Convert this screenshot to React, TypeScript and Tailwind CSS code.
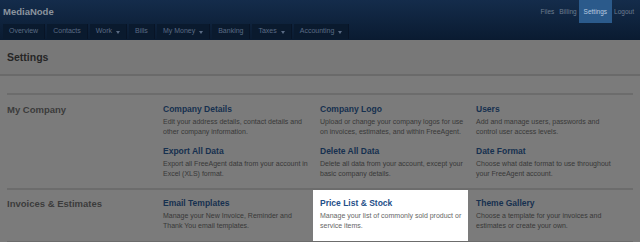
const tabs = [
  { label: "Overview" },
  { label: "Contacts" },
  { label: "Work", menu: true },
  { label: "Bills" },
  { label: "My Money", menu: true },
  { label: "Banking" },
  { label: "Taxes", menu: true },
  { label: "Accounting", menu: true },
];

type Item = { title: string; lines: string[]; active?: boolean };

const sections: { name: string; cols: Item[][] }[] = [
  {
    name: "My Company",
    cols: [
      [
        {
          title: "Company Details",
          lines: ["Edit your address details, contact details and", "other company information."],
        },
        {
          title: "Export All Data",
          lines: ["Export all FreeAgent data from your account in", "Excel (XLS) format."],
        },
      ],
      [
        {
          title: "Company Logo",
          lines: ["Upload or change your company logos for use", "on invoices, estimates, and within FreeAgent."],
        },
        {
          title: "Delete All Data",
          lines: ["Delete all data from your account, except your", "basic company details."],
        },
      ],
      [
        {
          title: "Users",
          lines: ["Add and manage users, passwords and", "control user access levels."],
        },
        {
          title: "Date Format",
          lines: ["Choose what date format to use throughout", "your FreeAgent account."],
        },
      ],
    ],
  },
  {
    name: "Invoices & Estimates",
    cols: [
      [
        {
          title: "Email Templates",
          lines: ["Manage your New Invoice, Reminder and", "Thank You email templates."],
        },
      ],
      [
        {
          title: "Price List & Stock",
          lines: ["Manage your list of commonly sold product or", "service items."],
          active: true,
        },
      ],
      [
        {
          title: "Theme Gallery",
          lines: ["Choose a template for your invoices and", "estimates or create your own."],
        },
      ],
    ],
  },
];

function Caret() {
  return (
    <svg width="4" height="3" viewBox="0 0 4 3" className="ml-[4px] mt-[1px]">
      <path d="M0 0h4L2 3z" fill="currentColor" />
    </svg>
  );
}

function SettingItem({ item }: { item: Item }) {
  return (
    <div className="mb-[9px] last:mb-0">
      <div
        className={
          "text-[8.5px] font-bold leading-[11px] " +
          (item.active ? "text-[#1f4f88]" : "text-[#16304f]")
        }
      >
        {item.title}
      </div>
      <div
        className={
          "mt-[2px] text-[7px] leading-[10px] whitespace-nowrap " +
          (item.active ? "text-[#666]" : "text-[#383838]")
        }
      >
        {item.lines.map((l) => (
          <div key={l}>{l}</div>
        ))}
      </div>
    </div>
  );
}

export default function App() {
  return (
    <div
      className="w-[640px] h-[242px] overflow-hidden bg-[#7b7b7b]"
      style={{ fontFamily: '"Liberation Sans", Arial, sans-serif' }}
    >
      {/* top bar */}
      <div className="h-[40px] bg-gradient-to-b from-[#142c4b] to-[#0a1b31] flex flex-col">
        <div className="h-[24px] flex items-start justify-between">
          <div className="pl-[3px] pt-[5px] text-[9.5px] font-bold text-[#8b949e]">MediaNode</div>
          <div className="flex items-start text-[6.5px] text-[#6d7d90] pr-[6px]">
            <span className="pt-[7px] mr-[5px]">Files</span>
            <span className="pt-[7px] mr-[2px]">Billing</span>
            <span className="h-[23px] px-[5px] pt-[7px] bg-[#2b5a8b] text-[#b9cbe0]">Settings</span>
            <span className="pt-[7px] ml-[2px]">Logout</span>
          </div>
        </div>
        <div className="h-[16px] flex pl-[3px] gap-[2px]">
          {tabs.map((t) => (
            <div
              key={t.label}
              className="h-[15px] flex items-center px-[6px] bg-[#0a1a2e] border-r border-[#081426] text-[7px] text-[#5a6b84]"
            >
              {t.label}
              {t.menu && <Caret />}
            </div>
          ))}
        </div>
      </div>

      {/* page header */}
      <div className="h-[36px] bg-[#787878] border-b-2 border-[#6a6a6a] flex items-center px-[7px]">
        <h1 className="text-[10.5px] font-bold text-[#262626] pt-[1px]">Settings</h1>
      </div>

      <div className="mx-[7px] mt-[17px] border-t-2 border-[#6c6c6c]">
        {sections.map((s, si) => (
          <div
            key={s.name}
            className="grid grid-cols-[156px_157px_156px_1fr] border-b-2 border-[#6c6c6c]"
          >
            <div
              className={
                (si === 0 ? "pt-[9px]" : "pt-[8px]") +
                " text-[9.5px] font-bold leading-[11px] text-[#3b3b3b]"
              }
            >
              {s.name}
            </div>
            {s.cols.map((col, i) => {
              const active = col.some((c) => c.active);
              return (
                <div
                  key={i}
                  className={
                    active
                      ? "-ml-[7px] w-[155px] pl-[7px] pt-[8px] pb-[9px] bg-white"
                      : si === 0
                        ? "pt-[9px] pb-[9px]"
                        : "pt-[8px] pb-[10px]"
                  }
                >
                  {col.map((item) => (
                    <SettingItem key={item.title} item={item} />
                  ))}
                </div>
              );
            })}
          </div>
        ))}
      </div>
    </div>
  );
}
